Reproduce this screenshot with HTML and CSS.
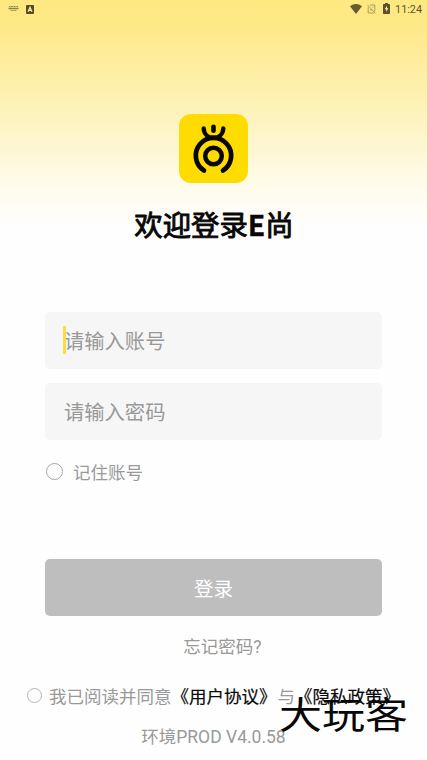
FILE: index.html
```
<!DOCTYPE html>
<html lang="zh-CN">
<head>
<meta charset="utf-8">
<title>登录</title>
<link rel="stylesheet" href="styles.css">
</head>
<body>
<div class="screen">
  <header class="status">
    <div class="status-left">
      <svg width="11" height="8" viewBox="0 0 11 8" fill="none" stroke="#8e8246">
        <path d="M1 1.5h9" stroke-dasharray="1.2 .4"/><path d="M.5 3.5h10" stroke-width="1.5"/><path d="M2.5 5.5h6" opacity=".7"/>
      </svg>
      <svg width="8" height="9" viewBox="0 0 8 9">
        <rect width="8" height="9" rx="1" fill="#554b25"/>
        <path d="M2 6.8 4 2.2l2 4.6M2.8 5.3h2.4" fill="none" stroke="#fff0a8" stroke-width="1.2"/>
      </svg>
    </div>
    <div class="status-right">
      <svg width="12" height="10" viewBox="0 0 12 10"><path d="M0 2.2Q6-2 12 2.2L6 10Z" fill="#655a30"/></svg>
      <svg class="sim" width="9" height="10" viewBox="0 0 9 10" fill="none" stroke="#aa9d5b" stroke-width="1">
        <path d="M3 1h4.8v6.600M1.200 3.200V9h5.600M.4.8l8 8.600M3 6h2M5.500 3h1"/>
      </svg>
      <svg class="battery" width="7" height="11" viewBox="0 0 7 11">
        <path d="M2 0h3v1h1.200q.8 0 .8.8v8.400q0 .8-.8.8H.8Q0 11 0 10.200V1.800Q0 1 .8 1H2Z" fill="#5b5029"/>
        <path d="M4 2.700 1.700 6.300h1.500v2.600l2.200-3.700H4Z" fill="#fff0a8"/>
      </svg>
      <span>11:24</span>
    </div>
  </header>
  <main class="content">
    <svg class="logo" width="69" height="69" viewBox="0 0 69 69" fill="none" stroke="#090800" stroke-linecap="round">
      <rect width="69" height="69" rx="12" fill="#fedc00" stroke="none"/>
      <path d="M25 56.500A17.700 17.700 0 1 1 44 56.500" stroke-width="4.700"/>
      <circle cx="34.500" cy="42" r="8.300" stroke-width="4.500"/>
      <path d="M24.700 14.500C25 20 29 23.800 34.500 23.800S44 20 44.300 14.500" stroke-width="4.400"/>
      <path d="M34.500 12.700v4" stroke-width="4.600"/>
    </svg>
    <h1>欢迎登录<strong>E</strong>尚</h1>
    <form class="form">
      <div class="field"><span class="caret"></span>请输入账号</div>
      <div class="field">请输入密码</div>
      <div class="remember"><span class="radio"></span>记住账号</div>
      <div class="login">登录</div>
    </form>
    <div class="forgot">忘记密码?</div>
    <div class="agree"><span class="radio small"></span><span>我已阅读并同意<b>《用户协议》</b></span><span class="second">与<b>《隐私政策》</b></span></div>
    <div class="version">环境PROD V4.0.58</div>
  </main>
  <div class="watermark">大玩客</div>
</div>
</body>
</html>
```
FILE: styles.css
```
* { box-sizing: border-box; }
body { margin: 0; background: #fefefe; }
.screen {
  position: relative;
  width: 427px;
  height: 760px;
  overflow: hidden;
  font-family: Roboto, "Noto Sans CJK SC", sans-serif;
  font-size: 17.5px;
  color: #999;
  white-space: nowrap;
  background: linear-gradient(#fee880 0, #fee98a 30px, #feeea3 70px, #fdf2b9 110px, #fef7d5 150px, #fffcee 190px, #fefefe 230px);
}
.status {
  display: flex;
  justify-content: space-between;
  height: 18px;
  padding: 0 5px 0 8px;
}
.status-left, .status-right { display: flex; align-items: center; }
.status-left { gap: 7px; }
.status-right { font-size: 10.8px; color: #5f552f; }
.status-right svg { margin-top: -1px; }
.status-right .sim { margin-left: 5px; }
.status-right .battery { margin: -1px 5px 0 7px; }
.content { display: flex; flex-direction: column; align-items: center; }
.logo { display: block; margin-top: 96px; }
h1 {
  margin: 20px 0 0 1px;
  font-family: "Noto Sans CJK SC", sans-serif;
  font-size: 28.4px;
  line-height: 42px;
  font-weight: 400;
  color: #080808;
  -webkit-text-stroke: .9px #080808;
}
h1 strong { font-weight: 700; -webkit-text-stroke: .3px #080808; }
.form { width: 337px; margin: 67px 0 0; }
.field {
  position: relative;
  height: 57px;
  margin-bottom: 14px;
  padding-left: 19px;
  border-radius: 5px;
  background: #f6f6f6;
  font-size: 20.3px;
  line-height: 61px;
}
.caret {
  position: absolute;
  left: 18px;
  top: 14px;
  width: 2.500px;
  height: 28px;
  background: #fbdc45;
}
.remember { display: flex; align-items: center; height: 34px; padding-left: 1px; }
.radio {
  width: 17px;
  height: 17px;
  margin-right: 10px;
  border: 1px solid #a5a5a5;
  border-radius: 50%;
}
.radio.small { width: 15px; height: 15px; margin-right: 7px; border-color: #b5b5b5; }
.login {
  height: 57px;
  margin-top: 71px;
  border-radius: 5px;
  background: #bebebe;
  color: #fff;
  font-size: 19.5px;
  line-height: 61px;
  text-align: center;
}
.forgot { height: 30px; margin: 16px 0 0 18px; line-height: 31px; }
.agree { display: flex; align-items: center; align-self: flex-start; height: 30px; margin: 18px 0 0 27px; }
.agree b { font-weight: 400; color: #080808; -webkit-text-stroke: .2px #080808; }
.second { margin-left: 1px; }
.version { height: 30px; margin-top: 12px; line-height: 31px; }
.watermark {
  position: absolute;
  left: 279px;
  top: 688px;
  font-family: "Noto Sans CJK SC", sans-serif;
  font-size: 43px;
  line-height: 50px;
  font-weight: 400;
  color: #080808;
  transform: scaleY(.86);
}
```
